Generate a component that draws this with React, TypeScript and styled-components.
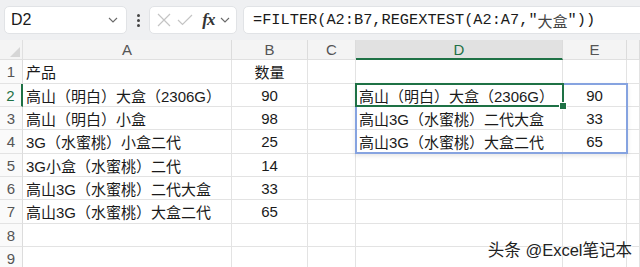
import React from "react"
import styled, { createGlobalStyle } from "styled-components"

const GlobalStyle = createGlobalStyle`
  html, body {
    margin: 0;
    padding: 0;
    background: #fff;
    overflow: hidden;
  }
  body {
    font-family: "Liberation Sans", "Noto Sans CJK SC", sans-serif;
  }
`

const COLS = [
  { key: "A", width: 209, align: "left", label: "A" },
  { key: "B", width: 76, align: "center", label: "B" },
  { key: "C", width: 48, align: "center", label: "C" },
  { key: "D", width: 207, align: "left", label: "D" },
  { key: "E", width: 64, align: "center", label: "E" },
  // only a sliver of F is visible, so no letter is shown
  { key: "F", width: 13, align: "center", label: "" },
]

const ROW_HEIGHTS = [24, 23, 23, 24, 23, 23, 24, 23, 23]

const DATA: Record<number, Record<string, string>> = {
  1: { A: "产品", B: "数量" },
  2: { A: "高山（明白）大盒（2306G）", B: "90", D: "高山（明白）大盒（2306G）", E: "90" },
  3: { A: "高山（明白）小盒", B: "98", D: "高山3G（水蜜桃）二代大盒", E: "33" },
  4: { A: "3G（水蜜桃）小盒二代", B: "25", D: "高山3G（水蜜桃）大盒二代", E: "65" },
  5: { A: "3G小盒（水蜜桃）二代", B: "14" },
  6: { A: "高山3G（水蜜桃）二代大盒", B: "33" },
  7: { A: "高山3G（水蜜桃）大盒二代", B: "65" },
}

export default function App() {
  return (
    <Page>
      <GlobalStyle />
      <Toolbar>
        <NameBox>
          <span>D2</span>
          <Chevron />
        </NameBox>
        <Dots>
          <i />
          <i />
          <i />
        </Dots>
        <FnBox>
          <svg width="14" height="14" viewBox="0 0 14 14">
            <path d="M1 1 L13 13 M13 1 L1 13" stroke="#c4c4c4" strokeWidth="1.2" fill="none" />
          </svg>
          <svg width="16" height="12" viewBox="0 0 16 12">
            <path d="M1 6 L5.5 10.5 L15 1" stroke="#c4c4c4" strokeWidth="1.2" fill="none" />
          </svg>
          <Fx>fx</Fx>
          <Chevron />
        </FnBox>
        <FormulaBox>
          =FILTER(A2:B7,REGEXTEST(A2:A7,"<Cjk>大盒</Cjk>"))
        </FormulaBox>
      </Toolbar>

      <Sheet>
        <Grid>
          <Corner>
            <svg width="10" height="10" viewBox="0 0 10 10">
              <path d="M10 0 L10 10 L0 10 Z" fill="#d6d6d6" />
            </svg>
          </Corner>
          {COLS.map((c) => (
            <ColHead key={c.key} $active={c.key === "D"}>
              {c.label}
            </ColHead>
          ))}
          {ROW_HEIGHTS.map((h, i) => {
            const r = i + 1
            return (
              <React.Fragment key={r}>
                <RowHead $active={r === 2} style={{ height: h }}>
                  {r}
                </RowHead>
                {COLS.map((c) => (
                  <Cell key={c.key} $align={c.align}>
                    {DATA[r]?.[c.key] ?? ""}
                  </Cell>
                ))}
              </React.Fragment>
            )
          })}
        </Grid>
        <SpillRange />
        <ActiveCell>
          <Handle />
        </ActiveCell>
      </Sheet>

      <Watermark>头条 @Excel笔记本</Watermark>
    </Page>
  )
}

const Chevron = () => (
  <svg width="10" height="6" viewBox="0 0 10 6">
    <path d="M1 1 L5 5 L9 1" stroke="#6a6a6a" strokeWidth="1.1" fill="none" />
  </svg>
)

const Page = styled.div`
  position: relative;
  width: 640px;
  height: 267px;
  overflow: hidden;
  background: #fff;
`

const Toolbar = styled.div`
  display: flex;
  align-items: center;
  height: 40px;
  padding: 6px 0 6px 4px;
  box-sizing: border-box;
  background: #eff0f2;
`

const Box = styled.div`
  height: 28px;
  box-sizing: border-box;
  background: #fff;
  border: 1px solid #e1e3e6;
  border-radius: 5px;
  display: flex;
  align-items: center;
`

const NameBox = styled(Box)`
  width: 123px;
  padding: 0 8px 0 6px;
  justify-content: space-between;
  font-size: 16px;
  color: #1a1a1a;
`

const Dots = styled.div`
  width: 22px;
  display: flex;
  flex-direction: column;
  align-items: center;
  gap: 2px;

  & i {
    width: 3px;
    height: 3px;
    border-radius: 50%;
    background: #444;
  }
`

const FnBox = styled(Box)`
  width: 88px;
  padding: 0 6px 0 7px;
  justify-content: space-between;
`

const Fx = styled.span`
  font-family: "Liberation Serif", serif;
  font-style: italic;
  font-weight: bold;
  font-size: 17px;
  color: #333;
  margin-left: 4px;
  letter-spacing: -1px;
`

const FormulaBox = styled(Box)`
  flex: 1;
  margin-left: 6px;
  margin-right: -10px;
  padding-left: 9px;
  font-family: "Liberation Mono", monospace;
  font-size: 15.3px;
  color: #1a1a1a;
  white-space: nowrap;
`

const Cjk = styled.span`
  font-family: "Noto Sans CJK SC", sans-serif;
  font-size: 15px;
  color: #444;
`

const Sheet = styled.div`
  position: relative;
`

const Grid = styled.div`
  display: grid;
  grid-template-columns: 23px ${COLS.map((c) => c.width + "px").join(" ")};
  grid-template-rows: 20px;
  font-family: "Liberation Sans", "Noto Sans CJK SC", sans-serif;
`

const Corner = styled.div`
  background: #f4f4f4;
  border-right: 1px solid #e0e0e0;
  border-bottom: 1px solid #e0e0e0;
  box-sizing: border-box;
  display: flex;
  align-items: flex-end;
  justify-content: flex-end;
  padding: 0 2px 2px 0;
`

const ColHead = styled.div<{ $active?: boolean }>`
  height: 20px;
  box-sizing: border-box;
  background: ${(p) => (p.$active ? "#e1e1e1" : "#f4f4f4")};
  border-right: 1px solid #dcdcdc;
  border-bottom: ${(p) => (p.$active ? "2px solid #1e7145" : "1px solid #e0e0e0")};
  color: ${(p) => (p.$active ? "#1e7145" : "#555")};
  font-size: 15px;
  display: flex;
  align-items: center;
  justify-content: center;
`

const RowHead = styled.div<{ $active?: boolean }>`
  box-sizing: border-box;
  background: #fafafa;
  border-bottom: 1px solid #e3e3e3;
  border-right: ${(p) => (p.$active ? "2px solid #1e7145" : "1px solid #dcdcdc")};
  color: ${(p) => (p.$active ? "#1e7145" : "#555")};
  font-size: 15px;
  display: flex;
  align-items: center;
  justify-content: center;
`

const Cell = styled.div<{ $align: string }>`
  box-sizing: border-box;
  border-right: 1px solid #e3e3e3;
  border-bottom: 1px solid #e3e3e3;
  padding: 0 3px;
  font-size: 15px;
  color: #1a1a1a;
  white-space: nowrap;
  overflow: hidden;
  display: flex;
  align-items: center;
  justify-content: ${(p) => (p.$align === "center" ? "center" : "flex-start")};
`

const SpillRange = styled.div`
  position: absolute;
  left: 355px;
  top: 43px;
  width: 273px;
  height: 71px;
  box-sizing: border-box;
  border: 2px solid #86a3e0;
  box-shadow: 0 2px 4px rgba(0, 0, 0, 0.1);
  pointer-events: none;
`

const ActiveCell = styled.div`
  position: absolute;
  left: 355px;
  top: 43px;
  width: 209px;
  height: 24px;
  box-sizing: border-box;
  border: 2px solid #1e7145;
  pointer-events: none;
`

const Handle = styled.div`
  position: absolute;
  right: -5px;
  bottom: -5px;
  width: 6px;
  height: 6px;
  background: #1e7145;
  border: 1px solid #fff;
`

const Watermark = styled.div`
  position: absolute;
  right: 8px;
  bottom: 6px;
  font-family: "Liberation Sans", "Noto Sans CJK SC", sans-serif;
  font-size: 16.5px;
  color: #222;
  text-shadow: 0 0 2px #fff, 0 0 2px #fff, 1px 1px 1px #fff;
`
